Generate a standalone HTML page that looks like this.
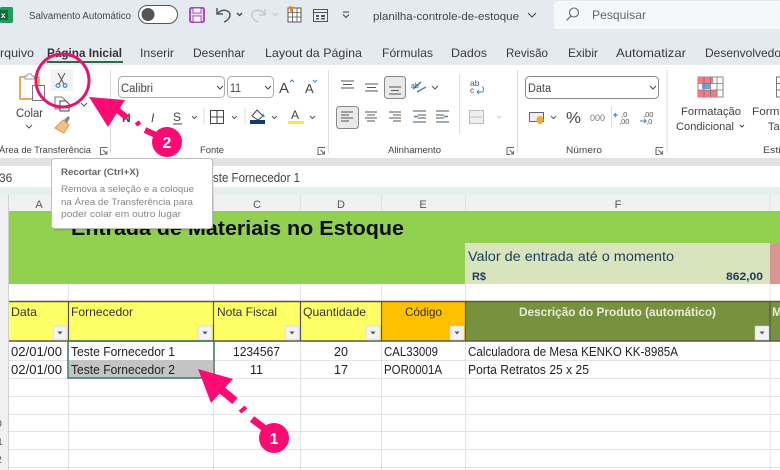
<!DOCTYPE html>
<html><head><meta charset="utf-8"><style>
html,body{margin:0;padding:0;background:#fff;width:780px;height:470px;overflow:hidden}
svg{display:block;filter:blur(.3px)}
text{font-family:"Liberation Sans",sans-serif;white-space:pre}
.ui{fill:#444;font-size:11.5px}
.c{fill:#222;font-size:12.5px}
.l{stroke:#e4e4e4;stroke-width:1}
</style></head><body>
<svg width="780" height="470" viewBox="0 0 780 470" xmlns="http://www.w3.org/2000/svg">
<rect width="780" height="470" fill="#fff"/>
<rect width="780" height="66" fill="#e5eaf0"/>
<!-- excel logo -->
<rect x="0" y="7" width="13" height="16" rx="1.500" fill="#1f9d5b"/><rect x="0" y="10" width="8" height="10" fill="#0f6b3a"/>
<text x="1" y="18" font-size="8" fill="#fff" font-weight="bold">x</text>
<text x="29" y="19" font-size="10" fill="#444" textLength="102" lengthAdjust="spacingAndGlyphs">Salvamento Automático</text>
<rect x="138.500" y="5.500" width="39" height="18" rx="9" fill="#fff" stroke="#555"/>
<circle cx="148" cy="14.500" r="6.500" fill="#555"/>
<!-- save -->
<rect x="190" y="8" width="14" height="14" rx="1.500" fill="#f0d6f2" stroke="#a94fc4" stroke-width="2"/><rect x="193" y="8" width="8" height="5" fill="#fff" stroke="#a94fc4"/><rect x="193" y="16" width="8" height="6" fill="#fff" stroke="#a94fc4"/>
<!-- undo/redo -->
<path d="M217 8v6h6M217 14c5-6 13-4 13 1 0 3-3 6-6 7" fill="none" stroke="#555" stroke-width="1.500"/>
<path d="M237 13l2.500 2.500 2.500-2.500" fill="none" stroke="#444" stroke-width="1.300"/>
<path d="M265 9v6h-6M265 14c-5-6-13-4-13 1 0 3 3 6 6 7" fill="none" stroke="#c4c9ce" stroke-width="1.500"/>
<path d="M273 13l2.500 2.500 2.500-2.500" fill="none" stroke="#c4c9ce"/>
<!-- qat icons -->
<rect x="288" y="8" width="13" height="14" fill="#fff" stroke="#555"/><path d="M288 12.500h13M288 17h13M292.500 8v14M297 8v14" stroke="#555" stroke-width=".8"/><path d="M289 6l5 1-3 7z" fill="#e38a1e"/>
<rect x="313.500" y="9.500" width="14" height="12" fill="#eee" stroke="#555"/><path d="M313.500 12.500h14" stroke="#555"/><rect x="316" y="15" width="3" height="2" fill="#555"/><rect x="321" y="15" width="4" height="2" fill="#555"/><rect x="316" y="18" width="3" height="1.500" fill="#555"/><rect x="321" y="18" width="4" height="1.500" fill="#555"/>
<path d="M343 12h6M343 14.500l3 3 3-3" fill="none" stroke="#444"/>
<text x="373" y="20" font-size="11" fill="#444" textLength="146" lengthAdjust="spacingAndGlyphs">planilha-controle-de-estoque</text>
<path d="M528 13l4 4 4-4" fill="none" stroke="#444"/>
<!-- search -->
<rect x="554" y="1" width="230" height="28" rx="3" fill="#f6f7f9"/>
<circle cx="574" cy="12.500" r="4.500" fill="none" stroke="#666" stroke-width="1.100"/><path d="M571 16l-4.500 4.500" stroke="#666" stroke-width="1.200"/>
<text x="592" y="19" font-size="12" fill="#666" textLength="54" lengthAdjust="spacingAndGlyphs">Pesquisar</text>
<!-- tabs -->
<g font-size="12" fill="#3a3a3a">
<text x="0" y="57" textLength="34" lengthAdjust="spacingAndGlyphs">rquivo</text>
<text x="47" y="57" textLength="75" lengthAdjust="spacingAndGlyphs" font-weight="bold" fill="#333">Página Inicial</text>
<text x="140" y="57" textLength="34" lengthAdjust="spacingAndGlyphs">Inserir</text>
<text x="193" y="57" textLength="52" lengthAdjust="spacingAndGlyphs">Desenhar</text>
<text x="265" y="57" textLength="97" lengthAdjust="spacingAndGlyphs">Layout da Página</text>
<text x="382" y="57" textLength="51" lengthAdjust="spacingAndGlyphs">Fórmulas</text>
<text x="451" y="57" textLength="36" lengthAdjust="spacingAndGlyphs">Dados</text>
<text x="506" y="57" textLength="42" lengthAdjust="spacingAndGlyphs">Revisão</text>
<text x="568" y="57" textLength="30" lengthAdjust="spacingAndGlyphs">Exibir</text>
<text x="616" y="57" textLength="70" lengthAdjust="spacingAndGlyphs">Automatizar</text>
<text x="705" y="57" textLength="80" lengthAdjust="spacingAndGlyphs">Desenvolvedor</text>
</g>
<rect x="47" y="61" width="76" height="2" fill="#217346"/>
<!-- ribbon -->
<rect x="0" y="65" width="780" height="93" fill="#fff"/>
<rect x="0" y="158" width="780" height="8" fill="#dfe3e6"/>
<path d="M110.500 70v83M328.500 70v83M517.500 70v83M667 70v83" stroke="#dcdcdc"/>
<path d="M459.500 75v58" stroke="#dcdcdc"/>
<!-- clipboard -->
<rect x="20" y="77" width="19" height="22" rx="1" fill="#fff" stroke="#e8a860" stroke-width="2"/>
<path d="M25 79v-3h2c0-3 5-3 5 0h2v3z" fill="#fff" stroke="#999"/>
<rect x="32.500" y="85.500" width="12" height="15" fill="#fff" stroke="#777"/>
<text x="16" y="117" class="ui" textLength="27" lengthAdjust="spacingAndGlyphs">Colar</text>
<path d="M26 125l3 3 3-3" fill="none" stroke="#555"/>
<!-- scissors -->
<rect x="51" y="69" width="22" height="22" fill="#f3f3f3"/>
<path d="M58 73l6 11M65 73l-6 11" stroke="#555" stroke-width="1" fill="none"/>
<circle cx="58" cy="85.500" r="1.900" fill="none" stroke="#3d87c4" stroke-width="1.200"/><circle cx="65" cy="85.500" r="1.900" fill="none" stroke="#3d87c4" stroke-width="1.200"/>
<!-- copy -->
<path d="M55 97h7l3 3v9h-10z" fill="#fff" stroke="#777"/><path d="M60 101h6l3 3v7h-9z" fill="#fff" stroke="#444"/>
<path d="M81 103l3 3 3-3" fill="none" stroke="#555"/>
<!-- brush -->
<path d="M55 128l8-8 6 5-5 8-4-2z" fill="#f3c184" stroke="#e0964a"/><path d="M64 120l4-4 2 2-3 5z" fill="#888"/>
<text x="-1" y="153" font-size="9.500" fill="#444" textLength="92" lengthAdjust="spacingAndGlyphs">Área de Transferência</text>
<g fill="none" stroke="#666"><path d="M100.500 147.500h7M100.500 147.500v7h3M103 150l4 4M107 151v3h-3"/>
<path d="M318 147.500h7M318 147.500v7h3M320.500 150l4 4M324.500 151v3h-3"/>
<path d="M507 147.500h7M507 147.500v7h3M509.500 150l4 4M513.500 151v3h-3"/>
<path d="M656 147.500h7M656 147.500v7h3M658.500 150l4 4M662.500 151v3h-3"/></g>
<!-- font -->
<rect x="118.500" y="76.500" width="106" height="21" rx="4" fill="#fff" stroke="#aaa"/>
<text x="121" y="92" font-size="11.500" fill="#444" textLength="32" lengthAdjust="spacingAndGlyphs">Calibri</text>
<path d="M217 86l3 3 3-3" fill="none" stroke="#444"/>
<rect x="227.500" y="76.500" width="46" height="21" rx="4" fill="#fff" stroke="#aaa"/>
<text x="230" y="92" font-size="11.500" fill="#444" textLength="11" lengthAdjust="spacingAndGlyphs">11</text>
<path d="M265 86l3 3 3-3" fill="none" stroke="#444"/>
<text x="279" y="93" font-size="15" fill="#444">A</text><path d="M290 82l2-2 2 2" fill="none" stroke="#3d87c4"/>
<text x="305" y="93" font-size="13" fill="#444">A</text><path d="M313 80l2 2 2-2" fill="none" stroke="#3d87c4"/>
<text x="122" y="122" font-size="12" fill="#444" font-weight="bold">N</text>
<text x="151" y="122" font-size="12" fill="#444" font-style="italic">I</text>
<text x="173" y="121" font-size="12" fill="#444">S</text><path d="M173 124h9" stroke="#444"/>
<path d="M192 116l2.500 2.500 2.500-2.500M232 116l2.500 2.500 2.500-2.500M272 116l2.500 2.500 2.500-2.500M310 116l2.500 2.500 2.500-2.500" fill="none" stroke="#555"/>
<path d="M204 108v16" stroke="#ddd"/>
<rect x="210.500" y="110.500" width="13" height="13" fill="#fff" stroke="#444"/><path d="M217 110v14M210 117h14" stroke="#444"/>
<path d="M245 108v16" stroke="#ddd"/>
<path d="M252 116l5-6 6 6-5 4z" fill="#fff" stroke="#444"/><path d="M263 113l2 4h-3z" fill="#3d87c4"/><rect x="250" y="120" width="15" height="4" fill="#123a6b"/>
<text x="291" y="119" font-size="12" fill="#444">A</text><rect x="288" y="121" width="16" height="3" fill="#f5ee30"/>
<text x="200" y="153" font-size="9.500" fill="#444" textLength="24" lengthAdjust="spacingAndGlyphs">Fonte</text>
<!-- align -->
<path d="M341 81h13M343 84.500h9M341 88h13M365 84h13M367 87.500h9M365 91h13" stroke="#555" stroke-width="1.100"/>
<rect x="384.500" y="76.500" width="21" height="22" rx="3" fill="#e9e9e9" stroke="#888"/><path d="M389 87h12M391 90.500h8M389 94h12" stroke="#555" stroke-width="1.100"/>
<path d="M413 89l8-7M417 92l9-5" stroke="#3d87c4" stroke-width="1.500"/><text x="411" y="88" font-size="7" fill="#555">ab</text>
<path d="M432 86l3 3 3-3" fill="none" stroke="#555"/>
<rect x="336.500" y="106.500" width="22" height="22" rx="3" fill="#e9e9e9" stroke="#888"/><path d="M341 112h12M341 115h8M341 118h12M341 121h8" stroke="#555" stroke-width="1.100"/>
<path d="M365 112h12M367 115h8M365 118h12M367 121h8M389 112h12M393 115h8M389 118h12M393 121h8" stroke="#555" stroke-width="1.100"/>
<path d="M413 111h13M418 115h8M418 118h8M413 122h13M436 111h13M436 115h8M436 118h8M436 122h13" stroke="#555" stroke-width="1.100"/>
<path d="M418 116.500h-4M444 116.500h4" stroke="#3d87c4" stroke-width="1.500"/>
<text x="470" y="86" font-size="8.500" fill="#555">ab</text><text x="470" y="93" font-size="8.500" fill="#555">c</text><path d="M477 92h5c2 0 2-5 0-5M477 92l2-2M477 92l2 2" fill="none" stroke="#3d87c4"/>
<rect x="469.500" y="110.500" width="14" height="13" fill="#eee" stroke="#bbb"/><path d="M471 117h11" stroke="#bbb"/>
<path d="M497 116l2 2 2-2" fill="none" stroke="#ccc"/>
<text x="388" y="153" font-size="9.500" fill="#444" textLength="53" lengthAdjust="spacingAndGlyphs">Alinhamento</text>
<!-- number -->
<rect x="525.500" y="76.500" width="133" height="22" rx="4" fill="#fff" stroke="#888"/>
<text x="528" y="92" font-size="11.500" fill="#444" textLength="23" lengthAdjust="spacingAndGlyphs">Data</text>
<path d="M650 86l3 3 3-3" fill="none" stroke="#444"/>
<rect x="529.500" y="112.500" width="14" height="9" fill="#eee" stroke="#666"/><ellipse cx="540" cy="120" rx="3.500" ry="4" fill="#efa93c"/>
<path d="M551 116l2.500 2.500 2.500-2.500" fill="none" stroke="#555"/>
<text x="566" y="123" font-size="16" fill="#444" textLength="15" lengthAdjust="spacingAndGlyphs">%</text>
<text x="590" y="121" font-size="9" fill="#777" textLength="15" lengthAdjust="spacingAndGlyphs">000</text>
<path d="M611.500 106v22" stroke="#ddd"/>
<text x="621" y="117" font-size="7.500" fill="#555">,0</text><text x="619" y="124" font-size="7.500" fill="#555">,00</text>
<path d="M618 115h-4l2-2M614 115l2 2" fill="none" stroke="#3d87c4"/>
<text x="643" y="117" font-size="7.500" fill="#555">,00</text><text x="646" y="124" font-size="7.500" fill="#555">,0</text>
<path d="M640 121h6l-2-2M646 121l-2 2" fill="none" stroke="#3d87c4"/>
<text x="566" y="153" font-size="9.500" fill="#444" textLength="36" lengthAdjust="spacingAndGlyphs">Número</text>
<!-- styles -->
<rect x="698" y="77" width="25" height="20" fill="#fff" stroke="#888"/>
<rect x="698" y="77" width="15" height="6" fill="#ee7b85"/><rect x="702" y="83" width="8" height="6" fill="#6fa4dd"/><rect x="698" y="90" width="19" height="7" fill="#ee7b85"/>
<path d="M698 83.500h25M698 90h25M704 77v20M710.500 77v20M717 77v20" stroke="#777" stroke-width=".8"/>
<rect x="776.500" y="77" width="8" height="20" fill="#fff" stroke="#777"/><path d="M776 83.500h6M776 90h6" stroke="#777"/>
<text x="681" y="115" font-size="11" fill="#444" textLength="60" lengthAdjust="spacingAndGlyphs">Formatação</text>
<text x="676" y="130" font-size="11" fill="#444" textLength="58" lengthAdjust="spacingAndGlyphs">Condicional</text>
<path d="M740 125l2 2 2-2" fill="none" stroke="#444"/>
<text x="752" y="115" font-size="11" fill="#444" textLength="34" lengthAdjust="spacingAndGlyphs">Forma</text>
<text x="768" y="130" font-size="11" fill="#444" textLength="14" lengthAdjust="spacingAndGlyphs">Tal</text>
<text x="763" y="153" font-size="9.500" fill="#444" textLength="20" lengthAdjust="spacingAndGlyphs">Estil</text>
<!-- formula bar -->
<rect x="0" y="166" width="780" height="21" fill="#fff"/>
<rect x="0" y="187" width="780" height="8" fill="#e6eeee"/>
<text x="-1" y="182" font-size="12" fill="#444">36</text>
<text x="213" y="182" font-size="12.500" fill="#444" textLength="87" lengthAdjust="spacingAndGlyphs">ste Fornecedor 1</text>
<!-- col headers -->
<rect x="0" y="195" width="780" height="16" fill="#f1f1f1"/>
<rect x="0" y="195" width="8" height="275" fill="#f0f0f0"/>
<path d="M8.500 195v275" stroke="#d0d0d0"/>
<path d="M68.500 195v16M213.500 195v16M300.500 195v16M381.500 195v16M465.500 195v16M770 195v16" stroke="#e0e0e0"/>
<g font-size="11" fill="#555" text-anchor="middle">
<text x="39" y="208">A</text><text x="257" y="208">C</text><text x="341" y="208">D</text><text x="423" y="208">E</text><text x="618" y="208">F</text>
</g>
<!-- title -->
<rect x="9" y="211" width="771" height="73" fill="#92d050"/>
<text x="71" y="235" font-size="20" font-weight="bold" fill="#0c0c0c" textLength="333" lengthAdjust="spacingAndGlyphs">Entrada de Materiais no Estoque</text>
<rect x="465" y="243" width="305" height="41" fill="#d8e4bc"/>
<rect x="770" y="243" width="10" height="41" fill="#da9694"/>
<text x="468" y="261" font-size="13.500" fill="#1f3f60" textLength="206" lengthAdjust="spacingAndGlyphs">Valor de entrada até o momento</text>
<text x="472" y="280" font-size="11" font-weight="bold" fill="#1f3864" textLength="14" lengthAdjust="spacingAndGlyphs">R$</text>
<text x="726" y="280" font-size="11" font-weight="bold" fill="#1f3864" textLength="37" lengthAdjust="spacingAndGlyphs">862,00</text>
<!-- grid -->
<path d="M68.500 284v17M213.500 284v17M300.500 284v17M381.500 284v17M465.500 284v17M770 284v17" class="l"/>
<path d="M9 360.500h771M9 378.500h771M9 396.500h771M9 414.500h771M9 431.500h771M9 449.500h771M9 467.500h771M68.500 341v129M213.500 341v129M300.500 341v129M381.500 341v129M465.500 341v129M770 341v129" class="l"/>
<!-- header row -->
<rect x="9" y="301" width="372" height="40" fill="#ffff66"/>
<rect x="381" y="301" width="84" height="40" fill="#ffc000"/>
<rect x="465" y="301" width="305" height="40" fill="#76923c"/>
<rect x="770" y="301" width="10" height="40" fill="#76923c"/>
<path d="M9 301.500h771M9 341h771" stroke="#5a5a3c" stroke-width="1.500"/>
<path d="M68.500 301v40M213.500 301v40M300.500 301v40M381.500 301v40M465.500 301v40M770 301v40" stroke="#555" stroke-width="1.200"/>
<g font-size="12" fill="#333">
<text x="11" y="316" textLength="26" lengthAdjust="spacingAndGlyphs">Data</text>
<text x="71" y="316" textLength="62" lengthAdjust="spacingAndGlyphs">Fornecedor</text>
<text x="217" y="316" textLength="60" lengthAdjust="spacingAndGlyphs">Nota Fiscal</text>
<text x="303" y="316" textLength="63" lengthAdjust="spacingAndGlyphs">Quantidade</text>
<text x="405" y="316" textLength="37" lengthAdjust="spacingAndGlyphs">Código</text>
</g>
<text x="519" y="316" font-size="12" font-weight="bold" fill="#e8ecd8" textLength="197" lengthAdjust="spacingAndGlyphs">Descrição do Produto (automático)</text>
<text x="772" y="316" font-size="12" font-weight="bold" fill="#e8ecd8">M</text>
<!-- filter buttons -->
<g fill="#f2f2f2" stroke="#ccc" stroke-width=".5">
<rect x="53" y="326" width="14" height="14"/><rect x="198" y="326" width="14" height="14"/><rect x="285" y="326" width="14" height="14"/><rect x="366" y="326" width="14" height="14"/><rect x="450" y="326" width="14" height="14"/><rect x="755" y="326" width="14" height="14"/>
</g>
<g fill="#555"><path d="M57.500 331.500h5l-2.500 3zM202.500 331.500h5l-2.500 3zM289.500 331.500h5l-2.500 3zM370.500 331.500h5l-2.500 3zM454.500 331.500h5l-2.500 3zM759.500 331.500h5l-2.500 3z"/></g>
<!-- data -->
<rect x="69" y="360" width="144" height="18" fill="#c4c4c4"/>
<g font-size="12.500" fill="#222">
<text x="11" y="356" textLength="51" lengthAdjust="spacingAndGlyphs">02/01/00</text>
<text x="11" y="374" textLength="51" lengthAdjust="spacingAndGlyphs">02/01/00</text>
<text x="71" y="356" textLength="104" lengthAdjust="spacingAndGlyphs">Teste Fornecedor 1</text>
<text x="71" y="374" textLength="104" lengthAdjust="spacingAndGlyphs">Teste Fornecedor 2</text>
<text x="233" y="356" textLength="47" lengthAdjust="spacingAndGlyphs">1234567</text>
<text x="250" y="374" textLength="13" lengthAdjust="spacingAndGlyphs">11</text>
<text x="334" y="356" textLength="14" lengthAdjust="spacingAndGlyphs">20</text>
<text x="334" y="374" textLength="14" lengthAdjust="spacingAndGlyphs">17</text>
<text x="384" y="356" textLength="54" lengthAdjust="spacingAndGlyphs">CAL33009</text>
<text x="384" y="374" textLength="58" lengthAdjust="spacingAndGlyphs">POR0001A</text>
<text x="468" y="356" textLength="210" lengthAdjust="spacingAndGlyphs">Calculadora de Mesa KENKO KK-8985A</text>
<text x="468" y="374" textLength="121" lengthAdjust="spacingAndGlyphs">Porta Retratos 25 x 25</text>
</g>
<rect x="68" y="341" width="146" height="37" fill="none" stroke="#3d7a5a" stroke-width="1.500"/>
<!-- row numbers -->
<g font-size="10.500" fill="#555"><text x="-4" y="427">0</text><text x="-3" y="445">1</text><text x="-4" y="463">2</text></g>
<!-- tooltip -->
<rect x="51.500" y="159" width="161" height="70" rx="3" fill="#000" opacity=".12" transform="translate(1 1.500)"/>
<rect x="51.500" y="158.500" width="161" height="70" rx="3" fill="#fff" stroke="#bdbdbd"/>
<text x="61" y="175" font-size="8.800" font-weight="bold" fill="#666" textLength="78" lengthAdjust="spacingAndGlyphs">Recortar (Ctrl+X)</text>
<g font-size="9.500" fill="#888">
<text x="61" y="192" textLength="133" lengthAdjust="spacingAndGlyphs">Remova a seleção e a coloque</text>
<text x="61" y="205" textLength="132" lengthAdjust="spacingAndGlyphs">na Área de Transferência para</text>
<text x="61" y="217" textLength="120" lengthAdjust="spacingAndGlyphs">poder colar em outro lugar</text>
</g>
<!-- annotations -->
<circle cx="62.500" cy="80.500" r="26.500" fill="none" stroke="#e4136f" stroke-width="3"/>
<path d="M89 97L125 100L108 127Z" fill="#ff0a73"/>
<path d="M114 107L127 118" stroke="#ff0a73" stroke-width="6" fill="none"/>
<path d="M136 125L140 122" stroke="#ff0a73" stroke-width="4" fill="none"/>
<path d="M145 130L160 137" stroke="#ff0a73" stroke-width="6" fill="none"/>
<circle cx="167" cy="142" r="15" fill="#ff0a73"/>
<text x="167" y="148" font-size="16" font-weight="bold" fill="#fff" text-anchor="middle">2</text>
<path d="M198 369L233 379L211 403Z" fill="#ff0a73"/>
<path d="M218 387L235 401" stroke="#ff0a73" stroke-width="8" fill="none"/>
<path d="M240 412L246 407" stroke="#ff0a73" stroke-width="4" fill="none"/>
<path d="M252 419L268 431" stroke="#ff0a73" stroke-width="7" fill="none"/>
<circle cx="274" cy="438" r="15" fill="#ff0a73"/>
<text x="274" y="444" font-size="16" font-weight="bold" fill="#fff" text-anchor="middle">1</text>
</svg>
</body></html>
